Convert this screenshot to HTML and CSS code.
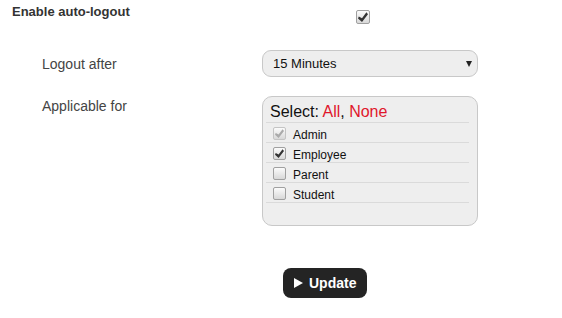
FILE: index.html
```html
<!DOCTYPE html>
<html lang="en">
<head>
  <meta charset="UTF-8" />
  <meta name="viewport" content="width=device-width, initial-scale=1.0"/>
  <title>Auto-logout settings</title>
  <link rel="stylesheet" href="styles.css">
</head>
<body>
  <form class="settings" onsubmit="return false">
    <div class="row row-title">
      <span class="title">Enable auto-logout</span>
      <input type="checkbox" class="check" checked>
    </div>

    <div class="row row-logout">
      <label class="label" for="logoutAfter">Logout after</label>
      <div class="select-wrap">
        <select id="logoutAfter" class="select">
          <option>5 Minutes</option>
          <option>10 Minutes</option>
          <option selected>15 Minutes</option>
          <option>30 Minutes</option>
          <option>60 Minutes</option>
        </select>
      </div>
    </div>

    <div class="row row-applicable">
      <span class="label">Applicable for</span>
      <div class="picker">
        <div class="picker-head">
          Select: <a href="#" class="pick-link" onclick="pickAll(true)">All</a>, <a href="#" class="pick-link" onclick="pickAll(false)">None</a>
        </div>
        <label class="opt"><input type="checkbox" class="check" checked disabled> Admin</label>
        <label class="opt"><input type="checkbox" class="check" checked> Employee</label>
        <label class="opt"><input type="checkbox" class="check"> Parent</label>
        <label class="opt"><input type="checkbox" class="check"> Student</label>
      </div>
    </div>

    <div class="actions">
      <button type="submit" class="btn-update">
        <svg width="9" height="10" viewBox="0 0 9 10"><polygon points="0,0 9,5 0,10" fill="#fff"/></svg>
        Update
      </button>
    </div>
  </form>

  <script>
    function pickAll(state) {
      document.querySelectorAll('.opt .check:not(:disabled)').forEach(function (c) {
        c.checked = state;
      });
    }
  </script>
</body>
</html>
```

FILE: styles.css
```css
* {
  box-sizing: border-box;
}

body {
  margin: 0;
  font-family: "Liberation Sans", Arial, sans-serif;
  font-size: 13px;
  color: #333;
  background: #fff;
}

.settings {
  padding-top: 4px;
}

.row {
  display: flex;
}

/* first line: title + master checkbox */
.row-title {
  padding-left: 12px;
  align-items: flex-start;
}

.title {
  flex: 0 0 344px;
  font-weight: bold;
  line-height: 16px;
  color: #333;
}

.row-title .check {
  margin-top: 6px;
  flex-basis: 14px;
  width: 14px;
  height: 14px;
}

.row-logout,
.row-applicable {
  padding-left: 42px;
}

.row-logout {
  margin-top: 26px;
  align-items: center;
}

.row-applicable {
  margin-top: 19px;
  align-items: flex-start;
}

.label {
  flex: 0 0 220px;
  font-size: 14px;
  line-height: 18px;
  color: #444;
}

.row-applicable .label {
  margin-top: 1px;
}

/* select */
.select-wrap {
  position: relative;
  width: 216px;
}

.select-wrap::after {
  content: "";
  position: absolute;
  right: 6px;
  top: 11px;
  border-left: 3.5px solid transparent;
  border-right: 3.5px solid transparent;
  border-top: 6px solid #222;
  pointer-events: none;
}

.select {
  appearance: none;
  -webkit-appearance: none;
  width: 100%;
  height: 27px;
  padding: 0 20px 0 10px;
  border: 1px solid #c8c8c8;
  border-radius: 9px;
  background: #eee;
  font-family: inherit;
  font-size: 13px;
  color: #111;
  outline: none;
}

/* applicable-for list */
.picker {
  width: 216px;
  padding: 6px 8px 22px 3px;
  border: 1px solid #c8c8c8;
  border-radius: 10px;
  background: #eee;
}

.picker-head {
  padding: 0 0 1px 4px;
  font-size: 16px;
  line-height: 18px;
  color: #111;
  border-bottom: 1px solid #dadada;
}

.pick-link {
  color: #e0162b;
  text-decoration: none;
}

.opt {
  display: flex;
  align-items: flex-end;
  height: 20px;
  padding-left: 7px;
  border-bottom: 1px solid #dadada;
  font-size: 12px;
  line-height: 13px;
  color: #111;
  gap: 3px;
}

.opt .check {
  align-self: flex-start;
  margin: 4px 4px 0 0;
}

/* checkbox look */
.check {
  appearance: none;
  -webkit-appearance: none;
  position: relative;
  flex: 0 0 13px;
  width: 13px;
  height: 13px;
  margin: 0;
  border: 1px solid #a0a0a0;
  border-radius: 2px;
  background: linear-gradient(#fbfbfb, #d8d8d8);
}

.check:checked::before {
  content: "";
  position: absolute;
  left: 1px;
  top: 1px;
  right: 1px;
  bottom: 1px;
  background: #333;
  clip-path: polygon(8% 44%, 0 64%, 40% 100%, 100% 22%, 84% 2%, 40% 62%);
}

.check:disabled {
  border-color: #c4c4c4;
}

.check:disabled:checked::before {
  background: #aaa;
}

/* button */
.actions {
  margin-top: 42px;
  padding-left: 283px;
}

.btn-update {
  display: inline-flex;
  align-items: center;
  gap: 6px;
  height: 30px;
  padding: 0 11px;
  border: none;
  border-radius: 8px;
  background: #242424;
  color: #fff;
  font-family: inherit;
  font-size: 14px;
  font-weight: bold;
  cursor: pointer;
}
```
